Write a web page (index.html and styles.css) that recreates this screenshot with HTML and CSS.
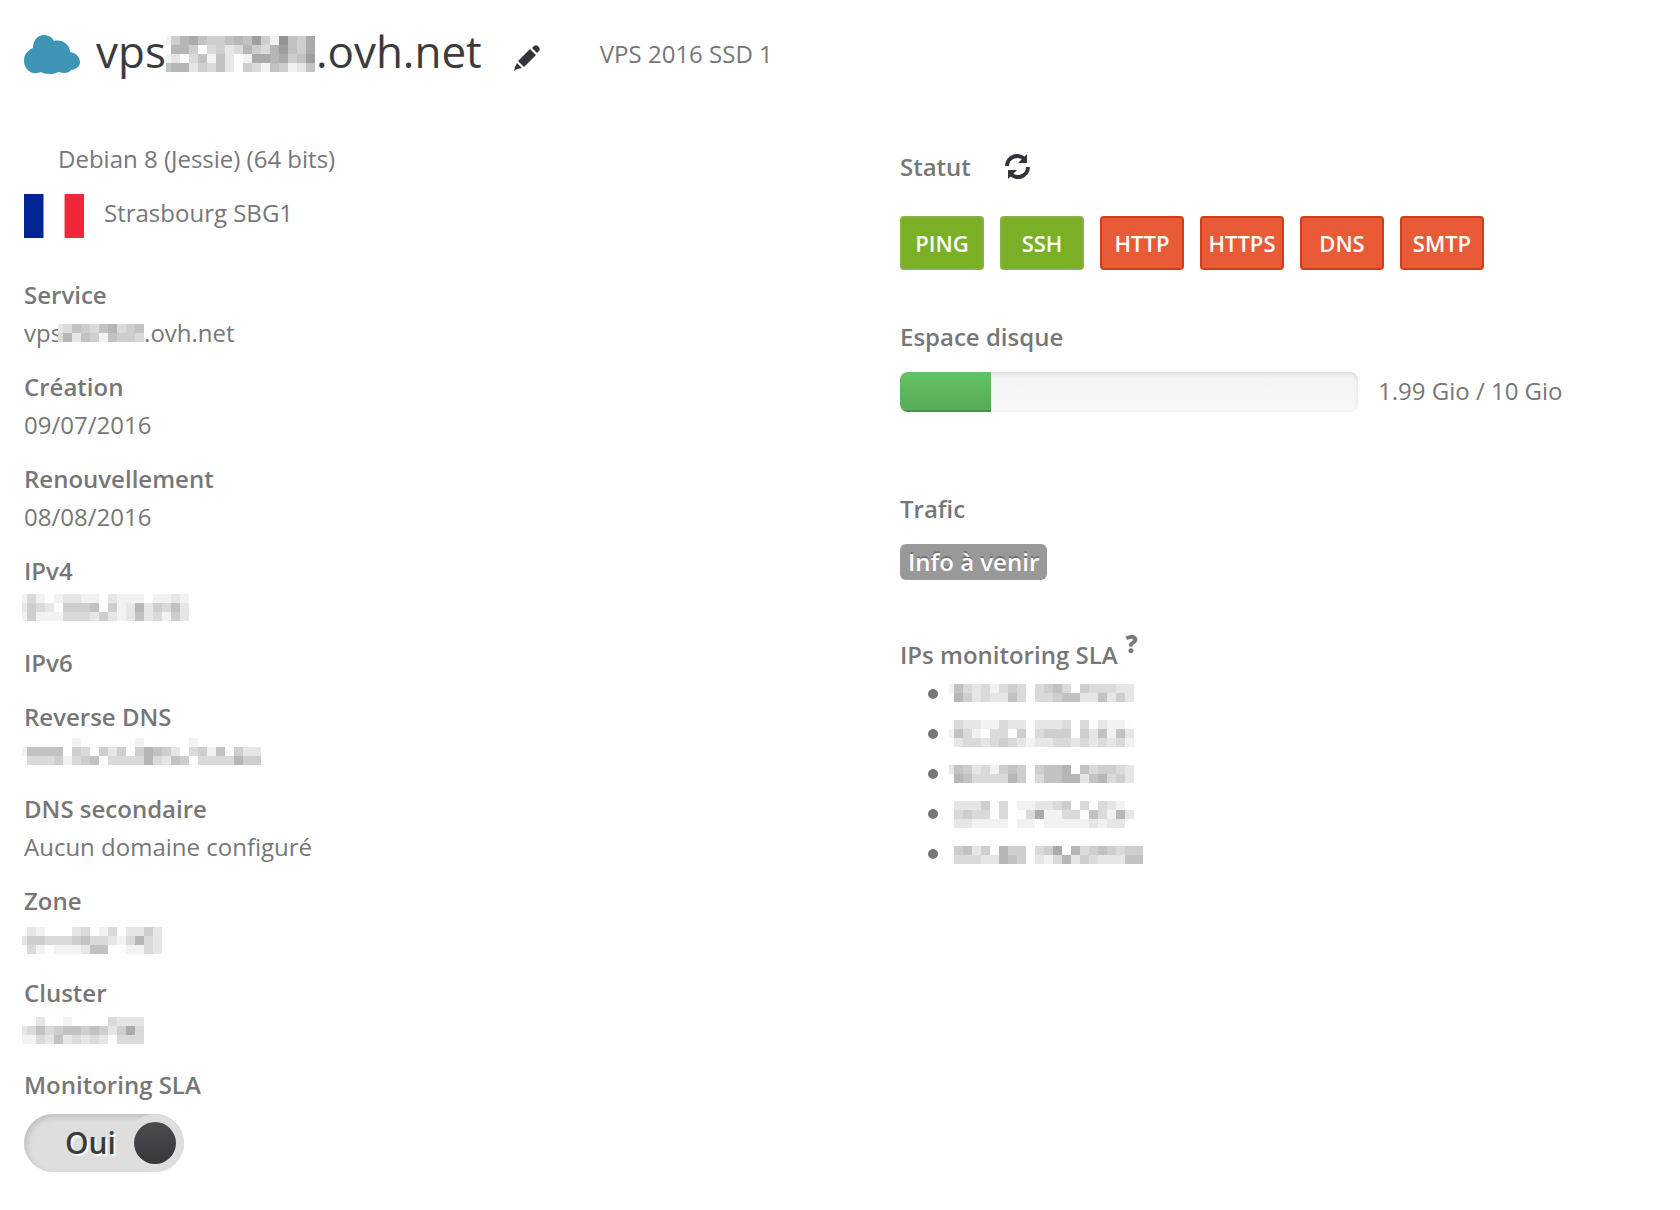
FILE: index.html
```html
<!DOCTYPE html>
<html lang="fr">
<head>
    <meta charset="UTF-8">
    <meta name="viewport" content="width=device-width, initial-scale=1.0">
    <title>VPS</title>
    <link rel="stylesheet" href="styles.css">
</head>
<body>
    <header class="header">
        <svg class="cloud" viewBox="0 0 56 39" aria-hidden="true">
            <path d="M9 13C9 5 14 0 20 0c4 0 8 2 10 6 5-1 9 0 11 2 3 2 5 5 5 9 6 1 10 5 10 10 0 4-4 8-9 8-1 2-4 3-7 3-3 0-4-1-6-1-3 2-6 2-9 2-4 0-6-1-8-2-2 1-5 1-7 1C5 38 0 32 0 26c0-7 4-11 9-13z"/>
        </svg>
        <h1>vps<svg class="mosaic mosaic-title" data-x="5" data-top="12" data-rows="14675445658419547 06640342364368547 12035152017767458 56624352043154125"></svg>.ovh.net</h1>
        <button class="icon-button edit" type="button" aria-label="Modifier">
            <svg width="26" height="26" viewBox="0 0 26 26">
                <path d="M19 2q2-3 5-1 3 3 1 5l-2 2-5-5zM16 4l6 6L10 22l-6-6zM3 18l5 5-5 1-3 2 1-4z"/>
            </svg>
        </button>
        <span class="offer">VPS 2016 SSD 1</span>
    </header>

    <main class="columns">
        <section class="infos">
            <p class="distribution">Debian 8 (Jessie) (64 bits)</p>
            <p class="location">
                <svg class="flag" viewBox="0 0 60 44" role="img" aria-label="France">
                    <rect width="19" height="44" fill="#002494"/>
                    <rect x="19" width="1" height="44" fill="#8394c9"/>
                    <rect x="41" width="19" height="44" fill="#ee2839"/>
                    <rect x="40" width="1" height="44" fill="#f6a0a8"/>
                </svg>
                Strasbourg SBG1
            </p>
            <dl>
                <dt>Service</dt>
                <dd>vps<svg class="mosaic mosaic-service" data-x="1" data-top="10" data-rows="2354356345 3625415443"></svg>.ovh.net</dd>
                <dt>Création</dt>
                <dd>09/07/2016</dd>
                <dt>Renouvellement</dt>
                <dd>08/08/2016</dd>
                <dt>IPv4</dt>
                <dd><svg class="mosaic" data-x="3" data-top="4" data-rows="1310122110211101121 2432044450412624352 1411133324212523142"></svg></dd>
                <dt>IPv6</dt>
                <dt>Reverse DNS</dt>
                <dd><svg class="mosaic" data-x="3" data-top="2" data-rows="000000100000010000010000000 155550430424046542034150422 033341345033336325403333644"></svg></dd>
                <dt>DNS secondaire</dt>
                <dd>Aucun domaine configuré</dd>
                <dt>Zone</dt>
                <dd><svg class="mosaic" data-x="3" data-top="7" data-rows="0210002301302242 2443334533213632 0310111255001132"></svg></dd>
                <dt>Cluster</dt>
                <dd><svg class="mosaic" data-x="3" data-top="5" data-rows="00200100003222 23534554542473 11325232320333"></svg></dd>
                <dt>Monitoring SLA</dt>
            </dl>
            <label class="switch">
                <input type="checkbox" aria-label="Monitoring SLA" checked>
                <span class="switch-text">Oui</span>
                <span class="switch-knob"></span>
            </label>
        </section>

        <section class="state">
            <div class="block block-status">
                <h2>Statut
                    <button class="icon-button refresh" type="button" aria-label="Rafraîchir">
                        <svg width="26" height="26" viewBox="0 0 26 26">
                            <path d="M2 12A10 10 0 0 1 20 6M23 13A10 10 0 0 1 5 19" fill="none" stroke="#333439" stroke-width="4"/>
                            <path d="M22 0v9h-9zM3 25v-9h9z"/>
                        </svg>
                    </button>
                </h2>
                <div class="services">
                    <button class="service up" type="button">PING</button>
                    <button class="service up" type="button">SSH</button>
                    <button class="service down" type="button">HTTP</button>
                    <button class="service down" type="button">HTTPS</button>
                    <button class="service down" type="button">DNS</button>
                    <button class="service down" type="button">SMTP</button>
                </div>
            </div>

            <div class="block block-disk">
                <h2>Espace disque</h2>
                <div class="disk">
                    <div class="progress">
                        <div class="bar" style="width: 19.9%"></div>
                    </div>
                    <span>1.99 Gio / 10 Gio</span>
                </div>
            </div>

            <div class="block block-traffic">
                <h2>Trafic</h2>
                <span class="badge">Info à venir</span>
            </div>

            <div class="block">
                <h2>IPs monitoring SLA <sup>?</sup></h2>
                <ul class="ips">
                    <li><svg class="mosaic" data-x="6" data-top="10" data-rows="153231343034530433322 064232253033455225242"></svg></li>
                    <li><svg class="mosaic" data-x="6" data-top="6" data-rows="032211322022230302110 153103304034440425152 023323432122332323231"></svg></li>
                    <li><svg class="mosaic" data-x="6" data-top="11" data-rows="254231454045560534432 065333364035566256342"></svg></li>
                    <li><svg class="mosaic" data-x="6" data-top="7" data-rows="022240301122340303210 034330300371133053162 022111101101111121220"></svg></li>
                    <li><svg class="mosaic" data-x="6" data-top="3" data-rows="0000000000000000000000 0452406440347063454344 0333226540213624322255"></svg></li>
                </ul>
            </div>
        </section>
    </main>

    <script src="script.js"></script>
</body>
</html>
```

FILE: styles.css
```css
body {
    margin: 0;
    padding: 24px;
    background-color: #fff;
    color: #777;
    font-family: "Open Sans", sans-serif;
    font-size: 24px;
    line-height: 38px;
}
h1, h2, p, dl, dd, ul {
    margin: 0;
    padding: 0;
}
.header {
    display: flex;
    align-items: center;
    height: 60px;
}
.header h1 {
    margin-left: 16px;
    padding-bottom: 6px;
    color: #3b3b3d;
    font-size: 44px;
    font-weight: 400;
    line-height: 54px;
}
.cloud {
    width: 56px;
    height: 39px;
    fill: #3e95b5;
}
.icon-button {
    padding: 0;
    border: none;
    background: none;
    line-height: 0;
    fill: #333439;
    cursor: pointer;
}
.edit {
    margin: 8px 0 0 32px;
}
.offer {
    margin-left: 60px;
}

/* hidden values */
.mosaic {
    overflow: visible;
    width: 200px;
    height: 38px;
    vertical-align: top;
    shape-rendering: crispEdges;
}
.mosaic-title {
    width: 150px;
    height: 54px;
}
.mosaic-service {
    width: 82px;
}

.columns {
    display: grid;
    grid-template-columns: 876px 1fr;
    padding-top: 60px;
}
.distribution {
    padding-left: 34px;
    line-height: 30px;
}
.location {
    display: flex;
    gap: 20px;
    margin: 20px 0 38px;
}
.flag {
    width: 60px;
    height: 44px;
}
dt {
    font-weight: 600;
}
dd + dt, dt + dt {
    margin-top: 16px;
}
dd {
    height: 38px;
}

.switch {
    display: flex;
    position: relative;
    box-sizing: border-box;
    align-items: center;
    justify-content: flex-end;
    gap: 18px;
    width: 160px;
    height: 58px;
    margin-top: 10px;
    padding: 0 8px;
    border-radius: 29px;
    background-color: #dedede;
    box-shadow: inset 2px 3px 6px rgba(0, 0, 0, 0.15);
    cursor: pointer;
}
.switch input {
    position: absolute;
    inset: 0;
    margin: 0;
    opacity: 0;
}
.switch-text {
    color: #3b3b3d;
    font-size: 30px;
    font-weight: 600;
    text-shadow: 2px 2px 1px #fff;
}
.switch-knob {
    width: 42px;
    height: 42px;
    border-radius: 50%;
    background: linear-gradient(#4a4b50, #37373b);
    box-shadow: 0 0 0 8px #dedede;
}

h2 {
    display: flex;
    align-items: center;
    font-size: 24px;
    font-weight: 600;
    line-height: 38px;
}
.state {
    padding-top: 4px;
}
.block-status {
    margin-bottom: 48px;
}
.refresh {
    margin-left: 34px;
}
.services {
    display: flex;
    gap: 16px;
    margin-top: 30px;
}
.service {
    width: 84px;
    height: 54px;
    padding: 0;
    border: 2px solid;
    border-radius: 4px;
    color: #fff;
    font-family: inherit;
    font-size: 22px;
    font-weight: 600;
    cursor: pointer;
}
.up {
    border-color: #88b245;
    background-color: #7aaf26;
}
.down {
    border-color: #cf3d1d;
    background-color: #e95b37;
}
.block-disk {
    margin-bottom: 78px;
}
.disk {
    display: flex;
    gap: 20px;
    margin-top: 16px;
}
.progress {
    overflow: hidden;
    width: 458px;
    height: 40px;
    border-radius: 8px;
    background: linear-gradient(#f3f3f3, #f9f9f9);
    box-shadow: inset 0 2px 4px rgba(0, 0, 0, 0.1);
}
.bar {
    height: 100%;
    background: linear-gradient(#62c462, #57a957);
    box-shadow: inset 0 -2px 0 rgba(0, 0, 0, 0.15);
}
.block-traffic {
    margin-bottom: 55px;
}
.badge {
    display: inline-block;
    margin-top: 16px;
    padding: 0 8px;
    border-radius: 6px;
    background-color: #999;
    color: #fff;
    font-weight: 600;
    line-height: 36px;
    text-shadow: 0 -2px 0 rgba(0, 0, 0, 0.25);
}
sup {
    align-self: flex-start;
    margin-left: 8px;
    font-size: 24px;
    font-weight: 800;
    line-height: 16px;
}
.ips {
    padding-left: 48px;
    line-height: 40px;
    list-style: none;
}
.ips li {
    display: flex;
    align-items: center;
    height: 40px;
}
.ips li::before {
    content: "";
    width: 10px;
    height: 10px;
    margin: 0 10px 0 -20px;
    border-radius: 50%;
    background-color: #777;
}
.ips .mosaic {
    height: 40px;
}
```

FILE: script.js
```js
// Draws the hidden values: one digit per cell, 0 is white and 9 the darkest
const CELL = 9;

document.querySelectorAll('.mosaic').forEach(svg => {
    const left = Number(svg.dataset.x);
    const top = Number(svg.dataset.top);
    svg.dataset.rows.split(' ').forEach((row, y) => {
        [...row].forEach((digit, x) => {
            const level = 254 - digit * 12;
            const rect = document.createElementNS('http://www.w3.org/2000/svg', 'rect');
            // the first cell of a row is cut to 5px
            rect.setAttribute('x', x ? left + (x - 1) * CELL : left - 5);
            rect.setAttribute('y', top + y * CELL);
            rect.setAttribute('width', x ? CELL : 5);
            rect.setAttribute('height', CELL);
            rect.setAttribute('fill', `rgb(${level}, ${level}, ${level})`);
            svg.appendChild(rect);
        });
    });
});
```
